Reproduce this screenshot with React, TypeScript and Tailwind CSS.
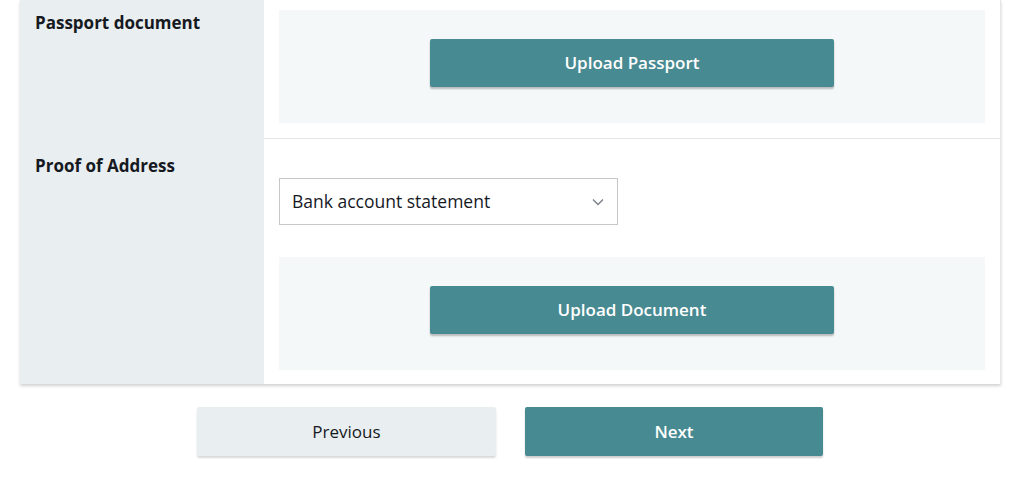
export default function App() {
  return (
    <div className="w-[1024px] h-[488px] bg-white overflow-hidden font-['Open_Sans',sans-serif] text-[#16191f]">
      <div className="ml-[20px] w-[981px] bg-white shadow-[0_2px_3px_rgba(0,0,0,0.18)] border-r border-[#e4e6e8]">
        <Row label="Passport document" labelTop="pt-[12px]" rowClass="pt-[10px] pb-[15px] border-b border-[#e3e6e8]">
          <UploadPanel text="Upload Passport" />
        </Row>
        <Row label="Proof of Address" labelTop="pt-[16px]" rowClass="pt-[39px] pb-[14px]">
          <div className="flex flex-col">
            <div className="w-[339px] h-[47px] border border-[#c5c8cb] flex items-center justify-between pl-[12px] pr-[12px] bg-white">
              <span className="text-[17.5px] text-[#16191f]">Bank account statement</span>
              <svg width="14" height="14" viewBox="0 0 14 14" fill="none">
                <path d="M2 4.5 L7 9.5 L12 4.5" stroke="#7b8087" strokeWidth="1.4" />
              </svg>
            </div>
            <div className="mt-[32px]">
              <UploadPanel text="Upload Document" />
            </div>
          </div>
        </Row>
      </div>
      <div className="flex justify-center gap-[29px] mt-[23px] w-[1020px]">
        <button className="w-[299px] h-[49px] rounded-[2px] bg-[#e9eef0] text-[17px] text-[#16191f] shadow-[0_2px_2px_rgba(0,0,0,0.15)]">
          Previous
        </button>
        <button className="w-[298px] h-[49px] rounded-[2px] bg-[#488a91] text-[17px] font-semibold text-white shadow-[0_2px_2px_rgba(0,0,0,0.2)]">
          Next
        </button>
      </div>
    </div>
  )
}

function Row({
  label,
  labelTop,
  rowClass,
  children,
}: {
  label: string
  labelTop: string
  rowClass: string
  children: React.ReactNode
}) {
  return (
    <div className="flex">
      <div className={`w-[244px] shrink-0 bg-[#e9eef0] pl-[15px] ${labelTop}`}>
        <p className="text-[17px] font-bold leading-[22px] text-[#16191f]">{label}</p>
      </div>
      <div className={`flex-1 pl-[15px] pr-[15px] ${rowClass}`}>{children}</div>
    </div>
  )
}

function UploadPanel({ text }: { text: string }) {
  return (
    <div className="h-[113px] bg-[#f5f8f9] flex justify-center pt-[29px]">
      <button className="w-[404px] h-[48px] rounded-[2px] bg-[#488a91] text-white text-[17px] font-semibold shadow-[0_2px_2px_rgba(0,0,0,0.25)]">
        {text}
      </button>
    </div>
  )
}
